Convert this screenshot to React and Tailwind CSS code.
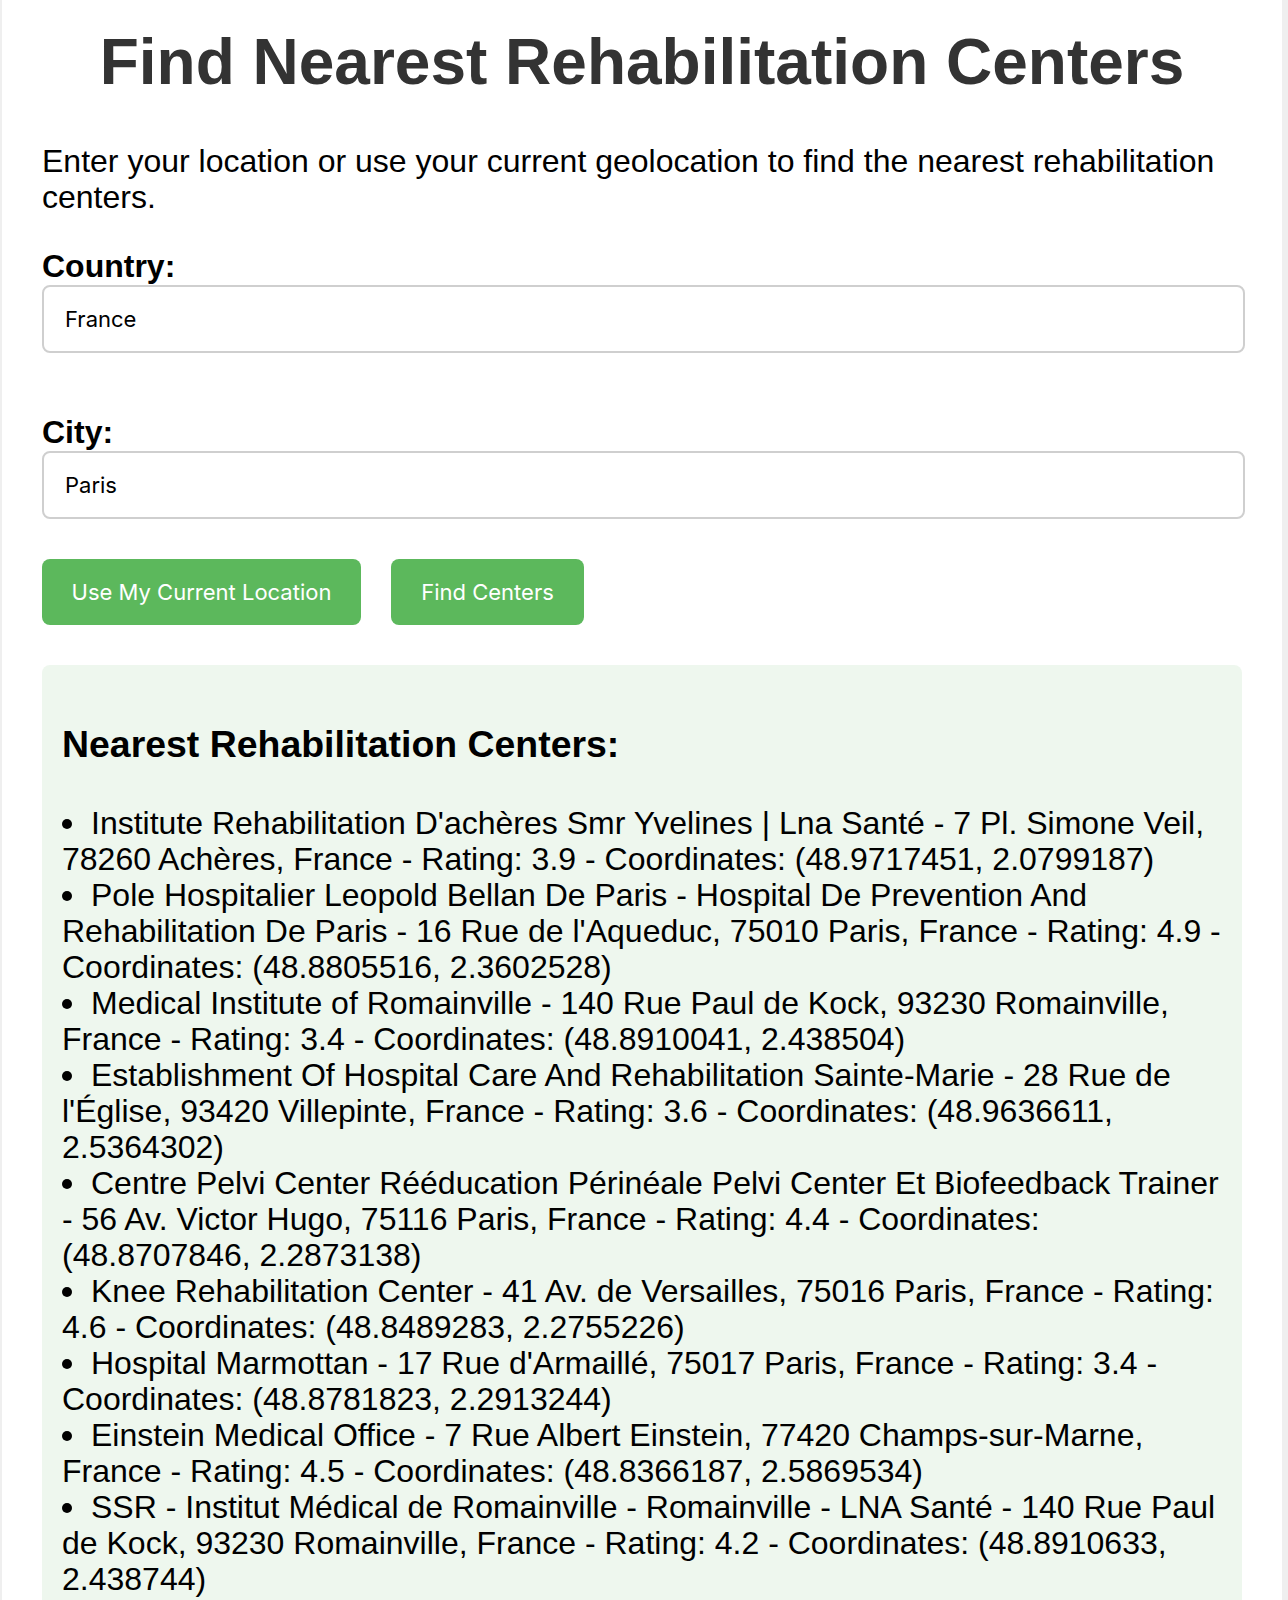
const CENTERS = [
  "Institute Rehabilitation D'achères Smr Yvelines | Lna Santé - 7 Pl. Simone Veil, 78260 Achères, France - Rating: 3.9 - Coordinates: (48.9717451, 2.0799187)",
  "Pole Hospitalier Leopold Bellan De Paris - Hospital De Prevention And Rehabilitation De Paris - 16 Rue de l'Aqueduc, 75010 Paris, France - Rating: 4.9 - Coordinates: (48.8805516, 2.3602528)",
  "Medical Institute of Romainville - 140 Rue Paul de Kock, 93230 Romainville, France - Rating: 3.4 - Coordinates: (48.8910041, 2.438504)",
  "Establishment Of Hospital Care And Rehabilitation Sainte-Marie - 28 Rue de l'Église, 93420 Villepinte, France - Rating: 3.6 - Coordinates: (48.9636611, 2.5364302)",
  "Centre Pelvi Center Rééducation Périnéale Pelvi Center Et Biofeedback Trainer - 56 Av. Victor Hugo, 75116 Paris, France - Rating: 4.4 - Coordinates: (48.8707846, 2.2873138)",
  "Knee Rehabilitation Center - 41 Av. de Versailles, 75016 Paris, France - Rating: 4.6 - Coordinates: (48.8489283, 2.2755226)",
  "Hospital Marmottan - 17 Rue d'Armaillé, 75017 Paris, France - Rating: 3.4 - Coordinates: (48.8781823, 2.2913244)",
  "Einstein Medical Office - 7 Rue Albert Einstein, 77420 Champs-sur-Marne, France - Rating: 4.5 - Coordinates: (48.8366187, 2.5869534)",
  "SSR - Institut Médical de Romainville - Romainville - LNA Santé - 140 Rue Paul de Kock, 93230 Romainville, France - Rating: 4.2 - Coordinates: (48.8910633, 2.438744)",
];

function Field({ label, value, className }) {
  return (
    <div className={className}>
      <label className="block text-[32px] leading-[36px] font-bold text-black mb-[1px]">{label}</label>
      <input
        type="text"
        defaultValue={value}
        className="block w-[calc(100%+3px)] h-[68px] px-[21px] rounded-[8px] border-2 border-[#cfcfcf] bg-white text-[22px] text-black font-['Inter',sans-serif] outline-none"
      />
    </div>
  );
}

export default function App() {
  return (
    <div className="min-h-[1600px] bg-[#efefef] pl-[2px] font-['Liberation_Sans',Arial,sans-serif]">
      <div className="w-[1280px] min-h-[1600px] bg-white px-[40px]">
        <h1 className="pt-[25px] text-center text-[64px] leading-[74px] font-bold text-[#333]">
          Find Nearest Rehabilitation Centers
        </h1>

        <p className="mt-[44px] text-[32px] leading-[36px] text-black">
          Enter your location or use your current geolocation to find the nearest rehabilitation centers.
        </p>

        <Field label="Country:" value="France" className="mt-[33px]" />
        <Field label="City:" value="Paris" className="mt-[61px]" />

        <div className="mt-[40px] flex gap-[30px]">
          <button className="h-[66px] w-[319px] rounded-[8px] bg-[#5cb85c] text-white text-[22px] font-['Inter',sans-serif]">
            Use My Current Location
          </button>
          <button className="h-[66px] w-[193px] rounded-[8px] bg-[#5cb85c] text-white text-[22px] font-['Inter',sans-serif]">
            Find Centers
          </button>
        </div>

        <div className="mt-[40px] rounded-[8px] bg-[#eef7ee] p-[20px]">
          <h3 className="mt-[38px] mb-[39px] text-[37.44px] leading-[43px] font-bold text-black">
            Nearest Rehabilitation Centers:
          </h3>
          <ul className="text-[32px] leading-[36px] text-black">
            {CENTERS.map((c, i) => (
              <li key={i}>
                <span className="inline-block w-[10px] h-[10px] rounded-full bg-black align-[5px] mr-[19px]" />
                {c}
              </li>
            ))}
          </ul>
        </div>
      </div>
    </div>
  );
}
